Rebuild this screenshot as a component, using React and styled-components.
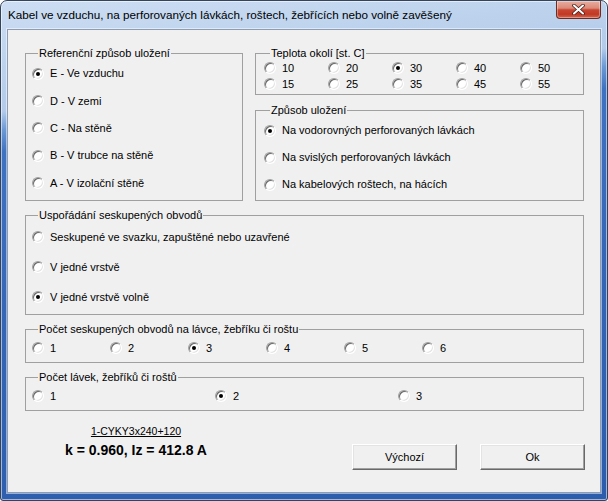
import React from 'react'
import styled, { createGlobalStyle } from 'styled-components'

const Global = createGlobalStyle`
  html, body { margin: 0; padding: 0; background: #ffffff; }
  body { font-family: "Liberation Sans", Arial, sans-serif; font-size: 11px; color: #000; }
`

const Window = styled.div`
  width: 608px;
  height: 501px;
  box-sizing: border-box;
  border: 1px solid #34445c;
  border-radius: 7px 7px 3px 3px;
  background: linear-gradient(174deg, #cddef3 0px, #bed3ed 60px, #b3cbe9 110px, #6d9ad6 128px, #3f72c0 150px, #3566b6 320px, #2c5dad 100%);
  box-shadow: inset 0 0 0 1px rgba(255, 255, 255, 0.55);
  display: flex;
  flex-direction: column;
  overflow: hidden;
`

const TitleBar = styled.div`
  height: 28px;
  display: flex;
  align-items: flex-start;
  padding-left: 7px;
`

const Title = styled.div`
  flex: 1;
  font-family: "Liberation Sans", Arial, sans-serif;
  font-size: 11.7px;
  line-height: 28px;
  color: #000;
  white-space: nowrap;
`

const CloseButton = styled.div`
  width: 43px;
  height: 17px;
  margin-right: 6px;
  border: 1px solid #6e2b22;
  border-top: none;
  border-radius: 0 0 4px 4px;
  background: linear-gradient(#e8ada0 0%, #dc8a78 42%, #c94632 52%, #c13925 78%, #d5654c 100%);
  box-shadow: inset 0 0 0 1px rgba(255, 255, 255, 0.35);
  display: flex;
  align-items: center;
  justify-content: center;
`

const Client = styled.div`
  flex: 1;
  margin: 0 6px 7px 6px;
  background: #f0f0f0;
  border: 1px solid #8b9cb4;
  box-shadow: 0 0 0 1px rgba(255, 255, 255, 0.5);
  padding: 17px 16px 0 17px;
  display: flex;
  flex-direction: column;
  gap: 8px;
`

const TopRow = styled.div`
  display: grid;
  grid-template-columns: 218px 329px;
  column-gap: 12px;
`

const Column = styled.div`
  display: flex;
  flex-direction: column;
  gap: 9px;
`

const Group = styled.fieldset`
  margin: 0;
  padding: 0 0 ${p => p.$pb ?? 2}px ${p => p.$pl ?? 6}px;
  border: 1px solid #a0a0a0;
  min-width: 0;
  display: ${p => (p.$cols ? 'grid' : 'flex')};
  flex-direction: column;
  grid-template-columns: ${p => p.$cols || 'none'};
  grid-auto-rows: ${p => p.$row || 24}px;
`

const Legend = styled.legend`
  margin-left: 6px;
  padding: 0 1px;
  font-size: 11px;
  line-height: 13px;
`

const Option = styled.label`
  display: flex;
  align-items: center;
  gap: 6px;
  height: ${p => (p.$h ? p.$h + 'px' : 'auto')};
  font-size: 11px;
  line-height: 13px;
  white-space: nowrap;
`

const Radio = styled.span`
  position: relative;
  flex: none;
  width: 12px;
  height: 12px;
  box-sizing: border-box;
  border-radius: 50%;
  background: #fff;
  border: 1px solid;
  border-color: #a0a0a0 #ffffff #ffffff #a0a0a0;
  box-shadow: inset 1px 1px 0 #696969, inset -1px -1px 0 #e3e3e3;

  &::after {
    content: '';
    display: ${p => (p.$on ? 'block' : 'none')};
    position: absolute;
    left: 3px;
    top: 3px;
    width: 4px;
    height: 4px;
    border-radius: 50%;
    background: #000;
  }
`

const Footer = styled.div`
  display: flex;
  align-items: flex-start;
  padding-top: 6px;
`

const Info = styled.div`
  width: 222px;
  display: flex;
  flex-direction: column;
  align-items: center;
  gap: 4px;
`

const CableName = styled.div`
  font-size: 10.5px;
  line-height: 13px;
  text-decoration: underline;
`

const Result = styled.div`
  font-size: 14px;
  font-weight: bold;
  line-height: 16px;
`

const Buttons = styled.div`
  margin-left: auto;
  margin-right: -1px;
  margin-top: 19px;
  display: flex;
  gap: 23px;
`

const Button = styled.div`
  width: 105px;
  height: 26px;
  box-sizing: border-box;
  background: #f0f0f0;
  border: 1px solid;
  border-color: #ffffff #696969 #696969 #ffffff;
  box-shadow: inset -1px -1px 0 #a0a0a0, inset 1px 1px 0 #e3e3e3;
  display: flex;
  align-items: center;
  justify-content: center;
  font-size: 11px;
`

const Opt = ({ on, h, children }) => (
  <Option $h={h}>
    <Radio $on={on} />
    <span>{children}</span>
  </Option>
)

const temps = ['10', '20', '30', '40', '50', '15', '25', '35', '45', '55']

export default function App() {
  return (
    <>
      <Global />
      <Window>
        <TitleBar>
          <Title>Kabel ve vzduchu, na perforovaných lávkách, roštech, žebřících nebo volně zavěšený</Title>
          <CloseButton>
            <svg width="13" height="11" viewBox="0 0 13 11">
              <path d="M2 1.5 L11 9.5 M11 1.5 L2 9.5" stroke="#4a1d17" strokeWidth="3.6" strokeLinecap="round" />
              <path d="M2 1.5 L11 9.5 M11 1.5 L2 9.5" stroke="#ffffff" strokeWidth="2" strokeLinecap="round" />
            </svg>
          </CloseButton>
        </TitleBar>
        <Client>
          <TopRow>
            <Group $pl={6} $pb={2}>
              <Legend>Referenční způsob uložení</Legend>
              <Opt on h={27.4}>E - Ve vzduchu</Opt>
              <Opt h={27.4}>D - V zemi</Opt>
              <Opt h={27.4}>C - Na stěně</Opt>
              <Opt h={27.4}>B - V trubce na stěně</Opt>
              <Opt h={27.4}>A - V izolační stěně</Opt>
            </Group>
            <Column>
              <Group $pl={8} $pb={2} $cols="repeat(5, 64px)" $row={16}>
                <Legend>Teplota okolí [st. C]</Legend>
                {temps.map(t => (
                  <Opt key={t} on={t === '30'}>{t}</Opt>
                ))}
              </Group>
              <Group $pl={8} $pb={2}>
                <Legend>Způsob uložení</Legend>
                <Opt on h={27}>Na vodorovných perforovaných lávkách</Opt>
                <Opt h={27}>Na svislých perforovaných lávkách</Opt>
                <Opt h={27}>Na kabelových roštech, na hácích</Opt>
              </Group>
            </Column>
          </TopRow>

          <Group $pl={6} $pb={2}>
            <Legend>Uspořádání seskupených obvodů</Legend>
            <Opt h={30}>Seskupené ve svazku, zapuštěné nebo uzavřené</Opt>
            <Opt h={30}>V jedné vrstvě</Opt>
            <Opt on h={30}>V jedné vrstvě volně</Opt>
          </Group>

          <Group $pl={6} $pb={2} $cols="repeat(6, 78px)" $row={24}>
            <Legend>Počet seskupených obvodů na lávce, žebříku či roštu</Legend>
            {['1', '2', '3', '4', '5', '6'].map(n => (
              <Opt key={n} on={n === '3'}>{n}</Opt>
            ))}
          </Group>

          <Group $pl={6} $pb={2} $cols="repeat(3, 183px)" $row={24}>
            <Legend>Počet lávek, žebříků či roštů</Legend>
            {['1', '2', '3'].map(n => (
              <Opt key={n} on={n === '2'}>{n}</Opt>
            ))}
          </Group>

          <Footer>
            <Info>
              <CableName>1-CYKY3x240+120</CableName>
              <Result>k = 0.960, Iz = 412.8 A</Result>
            </Info>
            <Buttons>
              <Button>Výchozí</Button>
              <Button>Ok</Button>
            </Buttons>
          </Footer>
        </Client>
      </Window>
    </>
  )
}
